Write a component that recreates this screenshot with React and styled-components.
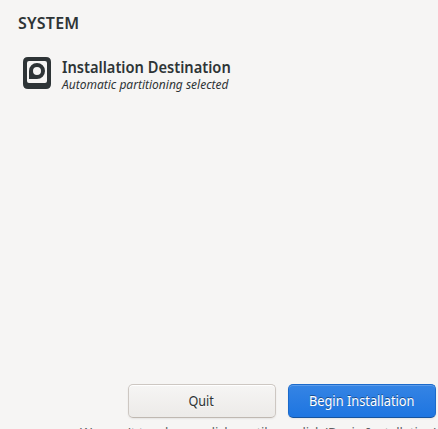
import React from 'react';
import styled, { createGlobalStyle } from 'styled-components';

const GlobalStyle = createGlobalStyle`
  * { box-sizing: border-box; }
  body {
    margin: 0;
    overflow: hidden;
    background: #f6f5f4;
    color: #2e3436;
    font-family: "Noto Sans", "Open Sans", sans-serif;
  }
`;

const Screen = styled.main`
  display: flex;
  flex-direction: column;
  width: 438px;
  height: 429px;
  overflow: hidden;
`;

const Heading = styled.h1`
  margin: 13px 0 0 18px;
  height: 20px;
  font-size: 16px;
  font-weight: 600;
  letter-spacing: 0.2px;
  line-height: 20px;
  white-space: nowrap;
`;

const Spoke = styled.section`
  display: flex;
  gap: 11px;
  margin: 24px 0 0 23px;
`;

const DiskIcon = styled.svg`
  flex: none;
  width: 28px;
  height: 32px;
`;

const SpokeText = styled.div`
  display: flex;
  flex-direction: column;
`;

const Title = styled.h2`
  margin: 0;
  height: 20px;
  font-size: 16px;
  font-weight: 600;
  line-height: 20px;
  white-space: nowrap;
`;

const Status = styled.p`
  margin: 0;
  font-size: 12px;
  font-style: italic;
  line-height: 16px;
  white-space: nowrap;
`;

const Narrow = styled.span`
  display: inline-block;
  transform: scaleX(${(p) => p.$scale});
  transform-origin: ${(p) => p.$origin || 'left'} center;
`;

const Footer = styled.footer`
  display: flex;
  flex-direction: column;
  gap: 5px;
  height: 45px;
  margin-top: auto;
`;

const Actions = styled.div`
  display: flex;
  gap: 12px;
  margin-left: 128px;
`;

const Button = styled.button`
  display: flex;
  flex: none;
  align-items: center;
  justify-content: center;
  width: 148px;
  height: 34px;
  padding: 0 ${(p) => (p.$primary ? 0 : 1)}px 0 0;
  border: 1px solid ${(p) => (p.$primary ? '#1b6acb' : '#cdc7c2')};
  border-bottom-color: ${(p) => (p.$primary ? '#15539e' : '#bfb8b1')};
  border-radius: 5px;
  background: ${(p) =>
    p.$primary
      ? 'linear-gradient(to top, #1f76e1 2px, #3584e4)'
      : 'linear-gradient(to top, #edebe9 2px, #f6f5f4)'};
  box-shadow: inset 0 1px ${(p) => (p.$primary ? 'rgba(255,255,255,.2)' : '#fff')},
    0 1px 2px rgba(0, 0, 0, 0.07);
  color: ${(p) => (p.$primary ? '#fff' : '#2e3436')};
  text-shadow: ${(p) => (p.$primary ? '0 -1px rgba(0,0,0,.4)' : '0 1px rgba(255,255,255,.7)')};
  font-family: inherit;
  font-size: 14px;
  line-height: 32px;
  white-space: nowrap;
`;

const Notice = styled.p`
  margin: 0 0 0 80px;
  color: #5d6163;
  font-size: 13px;
  letter-spacing: -0.1px;
  line-height: 18px;
  white-space: nowrap;
`;

export default function App() {
  return (
    <>
      <GlobalStyle />
      <Screen>
        <Heading>SYSTEM</Heading>
        <Spoke>
          <DiskIcon viewBox="0 0 28 32" aria-hidden="true">
            <path
              fill="#2e3436"
              fillRule="evenodd"
              d="M5 0H23Q28 0 28 5V27Q28 32 23 32H5Q0 32 0 27V5Q0 0 5 0ZM6 4Q4 4 4 6V24Q4 26 6 26H22Q24 26 24 24V6Q24 4 22 4Z"
            />
            <path
              fill="#2e3436"
              fillRule="evenodd"
              d="M14 6A8 8 0 0 1 14 22H6V14A8 8 0 0 1 14 6ZM14 10A4 4 0 1 0 14 18A4 4 0 1 0 14 10Z"
            />
          </DiskIcon>
          <SpokeText>
            <Title><Narrow $scale={0.916}>Installation Destination</Narrow></Title>
            <Status>Automatic partitioning selected</Status>
          </SpokeText>
        </Spoke>
        <Footer>
          <Actions>
            <Button type="button"><Narrow $scale={0.9} $origin="center">Quit</Narrow></Button>
            <Button type="button" $primary>
              <Narrow $scale={0.915} $origin="center">Begin Installation</Narrow>
            </Button>
          </Actions>
          <Notice>We won't touch your disks until you click 'Begin Installation'.</Notice>
        </Footer>
      </Screen>
    </>
  );
}
